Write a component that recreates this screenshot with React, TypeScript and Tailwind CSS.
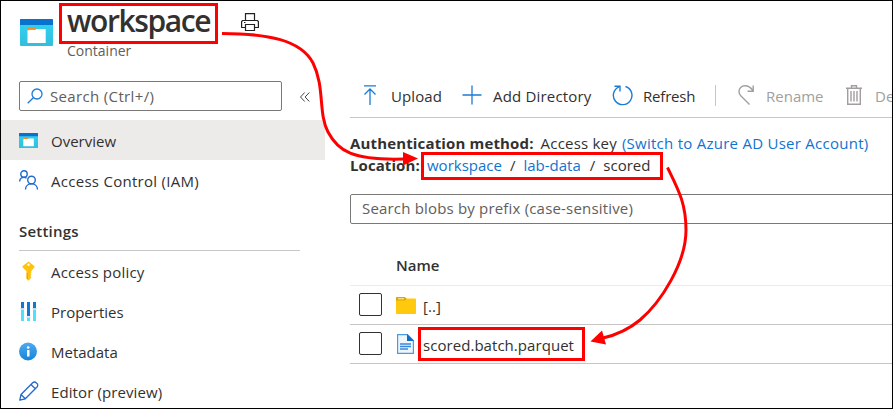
import React from "react";

function ContainerIcon({ className }: { className: string }) {
  return (
    <svg className={className} viewBox="0 0 33 27" preserveAspectRatio="none">
      <defs>
        <linearGradient id="cyan" x1="0" y1="0" x2="0" y2="1">
          <stop offset="0" stopColor="#32d4f5" />
          <stop offset="1" stopColor="#32bedd" />
        </linearGradient>
      </defs>
      <rect width="33" height="27" rx="1" fill="url(#cyan)" />
      <path d="M1 0H32a1 1 0 0 1 1 1V6H0V1a1 1 0 0 1 1-1Z" fill="#0872cc" />
      <path d="M7.500 10.500H15.500l1.200-.5H25a.7.7 0 0 1 .7.7V24H7.500Z" fill="#fff" />
      <path d="M7.500 9a.7.7 0 0 1 .7-.7H15.500a.7.7 0 0 1 .7.7v1l-.7.8H9.500l-2 1Z" fill="#f78d1e" />
    </svg>
  );
}

function PeopleIcon() {
  return (
    <svg className="h-5 w-5" viewBox="0 0 20 20" fill="none" stroke="#2168cf" strokeWidth="1.400">
      <circle cx="5" cy="4" r="3.200" />
      <path d="M.6 11.500C.8 9 2.500 7.400 5 7.400c1 0 1.800.3 2.500.8" />
      <circle cx="12.500" cy="10" r="3.800" />
      <path d="M6.500 19.500c0-3.300 2.500-5.700 6-5.700s6 2.400 6 5.700" />
    </svg>
  );
}

function KeyIcon() {
  return (
    <svg className="h-5 w-[19px]" viewBox="0 0 19 20">
      <path d="M9.500.5 15 4.800c.6.5.7 1 .3 1.700L12.300 10v2l-.8 1 .8 1-.8 1.200.8 1-.8 1.200-1.800 2h-.8l-1.500-1.800V10L3.700 6.500c-.4-.7-.3-1.200.3-1.700Z" fill="#ffc20f" />
      <path d="M8.300 12v6" stroke="#e8a200" strokeWidth="1" />
      <circle cx="9.500" cy="3.800" r="1.200" fill="#fff" />
    </svg>
  );
}

function PropertiesIcon() {
  return (
    <svg className="h-5 w-[19px]" viewBox="0 0 19 20">
      <path d="M2 1h3v6H2zM8 1h3v14H8zM14 1h3v6h-3z" fill="#0f78d4" />
      <path d="M2 8.500h3V20H2zM8 17h3v3H8zM14 8.500h3V20h-3z" fill="#50e0fb" />
      <path d="M1.500 7h4v1.300h-4zM7.500 15.500h4v1.300h-4zM13.500 7h4v1.300h-4z" fill="#c5d5df" />
    </svg>
  );
}

function InfoIcon() {
  return (
    <svg className="h-5 w-[19px]" viewBox="0 0 19 20">
      <defs>
        <linearGradient id="info" x1="0" y1="0" x2="0" y2="1">
          <stop offset="0" stopColor="#50aaf0" />
          <stop offset="1" stopColor="#1384d8" />
        </linearGradient>
      </defs>
      <circle cx="9" cy="10.500" r="9" fill="url(#info)" />
      <circle cx="9.200" cy="6.500" r="1.300" fill="#fff" />
      <path d="M8 9h2.500v6.500H8z" fill="#fff" />
    </svg>
  );
}

function PencilIcon() {
  return (
    <svg className="h-5 w-5" viewBox="0 0 20 20" fill="none" stroke="#2168cf" strokeWidth="1.300" strokeLinejoin="round">
      <path d="M.8 19.200 2 13.500 13.700 1.800a2.300 2.300 0 0 1 3.500 0l.8.800a2.300 2.300 0 0 1 0 3.400L6.300 17.800ZM12 3.500l4.300 4.300M2 13.500l4.300 4.300" />
    </svg>
  );
}

function NavItem({ icon, label, active = false, text = "" }: { icon: React.ReactNode; label: string; active?: boolean; text?: string }) {
  return (
    <div className={active ? "flex h-10 w-[324px] items-center bg-[#edebe9] pl-[18px]" : "flex h-10 w-[324px] items-center pl-[18px]"}>
      <div className="flex w-8 shrink-0 items-center">{icon}</div>
      <span className={`pt-0.5 ${text}`}>{label}</span>
    </div>
  );
}

function Header() {
  return (
    <header className="flex h-[72px] shrink-0 pl-[19px]">
      <ContainerIcon className="mt-[18px] h-[27px] w-[33px]" />
      <div className="ml-3.5 w-[174px]">
        <h1 className="h-[39px] text-[30px] leading-[39px] font-semibold tracking-[-1.400px]">workspace</h1>
        <p className="text-sm leading-[22px] text-[#605e5c]">Container</p>
      </div>
      <svg className="mt-3 h-[18px] w-[18px]" viewBox="0 0 18 18" fill="none" stroke="#222" strokeWidth="1.200">
        <path d="M4.500 7.500V.6h9v6.900M4.500 14.500H.6v-6l1-1h14.800l1 1v6h-3.900M4.500 11.500h9v6h-9zM3 9.500h1.500" />
      </svg>
    </header>
  );
}

function Sidebar() {
  return (
    <nav className="w-[324px] shrink-0">
      <div className="flex pt-2 pl-[18px]">
        <div className="flex h-[30px] w-[263px] items-center rounded-xs border border-[#7a7977] pl-[7px] text-[#605e5c]">
          <svg className="mr-[7px] h-4 w-4" viewBox="0 0 16 16" fill="none" stroke="#1b7bd6" strokeWidth="1.300">
            <circle cx="10" cy="6" r="5" />
            <path d="M6.300 9.700.7 15.300" />
          </svg>
          <span className="tracking-[0.350px]">Search (Ctrl+/)</span>
        </div>
        <svg className="mt-[11px] ml-[18px] h-[10px] w-[10px]" viewBox="0 0 10 10" fill="none" stroke="#444" strokeWidth="1">
          <path d="M4.700.5.500 5l4.200 4.500M9.300.5 5.100 5l4.200 4.500" />
        </svg>
      </div>
      <div className="mt-[9px]">
        <NavItem active icon={<ContainerIcon className="h-[15px] w-[19px]" />} label="Overview" />
        <NavItem icon={<PeopleIcon />} label="Access Control (IAM)" text="tracking-[0.280px]" />
      </div>
      <h2 className="mt-5 ml-[18px] h-[31px] w-[281px] border-b border-[#c8c6c4] leading-[22px] font-semibold tracking-[0.200px]">Settings</h2>
      <NavItem icon={<KeyIcon />} label="Access policy" text="tracking-[0.200px]" />
      <NavItem icon={<PropertiesIcon />} label="Properties" />
      <NavItem icon={<InfoIcon />} label="Metadata" />
      <NavItem icon={<PencilIcon />} label="Editor (preview)" text="tracking-[0.100px]" />
    </nav>
  );
}

function Toolbar() {
  return (
    <div className="flex h-[45px] items-center border-b border-[#c8c6c4] pl-[13px] whitespace-nowrap">
      <svg className="mr-[14px] h-5 w-[14px] shrink-0" viewBox="0 0 14 20" fill="none" stroke="#1b7bd6" strokeWidth="1.300">
        <path d="M1 .8h12M7 20V4M1.500 9.500 7 4l5.500 5.500" />
      </svg>
      <span className="w-[71px] shrink-0 pt-0.5 tracking-[0.100px]">Upload</span>
      <svg className="mr-[11px] h-5 w-5 shrink-0" viewBox="0 0 20 20" stroke="#1b7bd6" strokeWidth="1.300">
        <path d="M.5 10h19M10 .5v19" />
      </svg>
      <span className="w-[119px] shrink-0 pt-0.5 tracking-[0.180px]">Add Directory</span>
      <svg className="mr-2.5 h-[21px] w-[21px] shrink-0" viewBox="0 0 21 21" fill="none" stroke="#1b7bd6" strokeWidth="1.400">
        <path d="M13.500 1.500a9.300 9.300 0 1 1-6.500.3M2.500 1.200H8v5.300" />
      </svg>
      <span className="w-[72px] shrink-0 pt-0.5 tracking-[-0.200px]">Refresh</span>
      <div className="mr-[22px] h-[21px] w-px shrink-0 bg-[#c8c6c4]" />
      <svg className="mr-3 h-5 w-4 shrink-0" viewBox="0 0 16 20" fill="none" stroke="#a19f9d" strokeWidth="1.400">
        <path d="M15.200.5v5.800H9.500M15 6C13 2.500 10 .8 7 .8 3.500.8 1 3.300 1 6.500c0 2 .8 3.300 2 4.500l8.500 8.500" />
      </svg>
      <span className="w-20 shrink-0 pt-0.5 text-[#a19f9d]">Rename</span>
      <svg className="mr-[13px] h-5 w-4 shrink-0" viewBox="0 0 16 20" fill="none" stroke="#a19f9d" strokeWidth="1.400">
        <path d="M0 3.200h16M5.500 3V.8h5V3M1.700 3.200v16h12.600v-16M5 6v10.500M8 6v10.500M11 6v10.500" />
      </svg>
      <span className="shrink-0 pt-0.5 text-[#a19f9d]">Delete</span>
    </div>
  );
}

function FileRow({ icon, name }: { icon: React.ReactNode; name: string }) {
  return (
    <div className="flex h-[39px] items-center border-b border-[#c8c6c4] pl-[9px]">
      <div className="mt-[7px] h-[23px] w-[23px] self-start rounded-xs border border-[#323130]" />
      <div className="ml-3.5 w-[27px]">{icon}</div>
      <span className="pt-0.5 tracking-[0.050px]">{name}</span>
    </div>
  );
}

function FolderIcon() {
  return (
    <svg className="h-[17px] w-5" viewBox="0 0 20 17">
      <path d="M0 1a1 1 0 0 1 1-1h7.500L11 1.500H19a1 1 0 0 1 1 1V16a1 1 0 0 1-1 1H1a1 1 0 0 1-1-1Z" fill="#ffc90e" />
      <path d="M0 1a1 1 0 0 1 1-1h7.500L10.500 1.700 9 3.500H0Z" fill="#dfa500" />
      <path d="M2 1.800h6" stroke="#fff0b0" />
    </svg>
  );
}

function FileIcon() {
  return (
    <svg className="ml-px h-5 w-[17px]" viewBox="0 0 17 20">
      <path d="M.6.600H10.500L16.400 6.500V19.400H.6Z" fill="#eef6fd" stroke="#4b9be0" strokeWidth="1.200" />
      <path d="M10 0 17 7H10Z" fill="#0f6cc4" />
      <path d="M3 10h11M3 12.500h11M3 15h8" stroke="#3c87dc" strokeWidth="1.300" />
    </svg>
  );
}

function Content() {
  return (
    <main className="ml-[25px] min-w-0 flex-1 overflow-hidden">
      <Toolbar />
      <div className="mt-[14px] leading-[22px] whitespace-nowrap">
        <p>
          <b className="tracking-[0.150px]">Authentication method:</b>
          <span className="ml-[7px] tracking-[0.200px]">Access key</span>
          <span className="ml-[5px] tracking-[0.260px] text-[#1073cf]">(Switch to Azure AD User Account)</span>
        </p>
        <p className="flex">
          <b className="w-[77px] tracking-[0.080px]">Location:</b>
          <span className="text-[#1073cf]">workspace</span>
          <span className="mx-2">/</span>
          <span className="text-[#1073cf]">lab-data</span>
          <span className="mr-2 ml-[9px]">/</span>
          <span>scored</span>
        </p>
      </div>
      <div className="mt-[18px] -mr-2 h-[30px] rounded-xs border border-[#7a7977] pl-[11px] leading-[27px] tracking-[0.180px] text-[#605e5c]">
        Search blobs by prefix (case-sensitive)
      </div>
      <div className="h-[62px] border-b border-[#edebe9] pt-[30px] pl-[46px] leading-[22px] font-semibold">Name</div>
      <FileRow icon={<FolderIcon />} name="[..]" />
      <FileRow icon={<FileIcon />} name="scored.batch.parquet" />
    </main>
  );
}

function Annotations() {
  return (
    <>
      <div className="absolute top-[2px] left-[58px] h-[41px] w-[159px] border-3 border-[#f00]" />
      <div className="absolute top-[151px] left-[420px] h-[28px] w-[242px] border-3 border-[#f00]" />
      <div className="absolute top-[326px] left-[417px] h-[34px] w-[167px] border-3 border-[#f00]" />
      <svg className="absolute -top-px -left-px h-[409px] w-[893px]" viewBox="0 0 893 409" fill="none">
        <path d="M222 33.500C268 33.500 301 40 313 63C325 87 318 113 328 132C338 151 352 160.500 404 159" stroke="#f00" strokeWidth="3" />
        <path d="M403 152 418 158.500 403 165.500Z" fill="#f00" />
        <path d="M667.500 167.500C678 189 686 203 686 230C686 263 661 302 640 320C628 330 616 335 603 338" stroke="#f00" strokeWidth="3" />
        <path d="M602 330.500 590.500 341.500 606 344.500Z" fill="#f00" />
      </svg>
    </>
  );
}

export default function App() {
  return (
    <div className="relative flex h-[409px] w-[893px] flex-col overflow-hidden border border-black bg-white font-['Open_Sans','Noto_Sans',sans-serif] text-[15px] text-[#323130]">
      <Header />
      <div className="flex min-h-0 flex-1">
        <Sidebar />
        <Content />
      </div>
      <Annotations />
    </div>
  );
}
